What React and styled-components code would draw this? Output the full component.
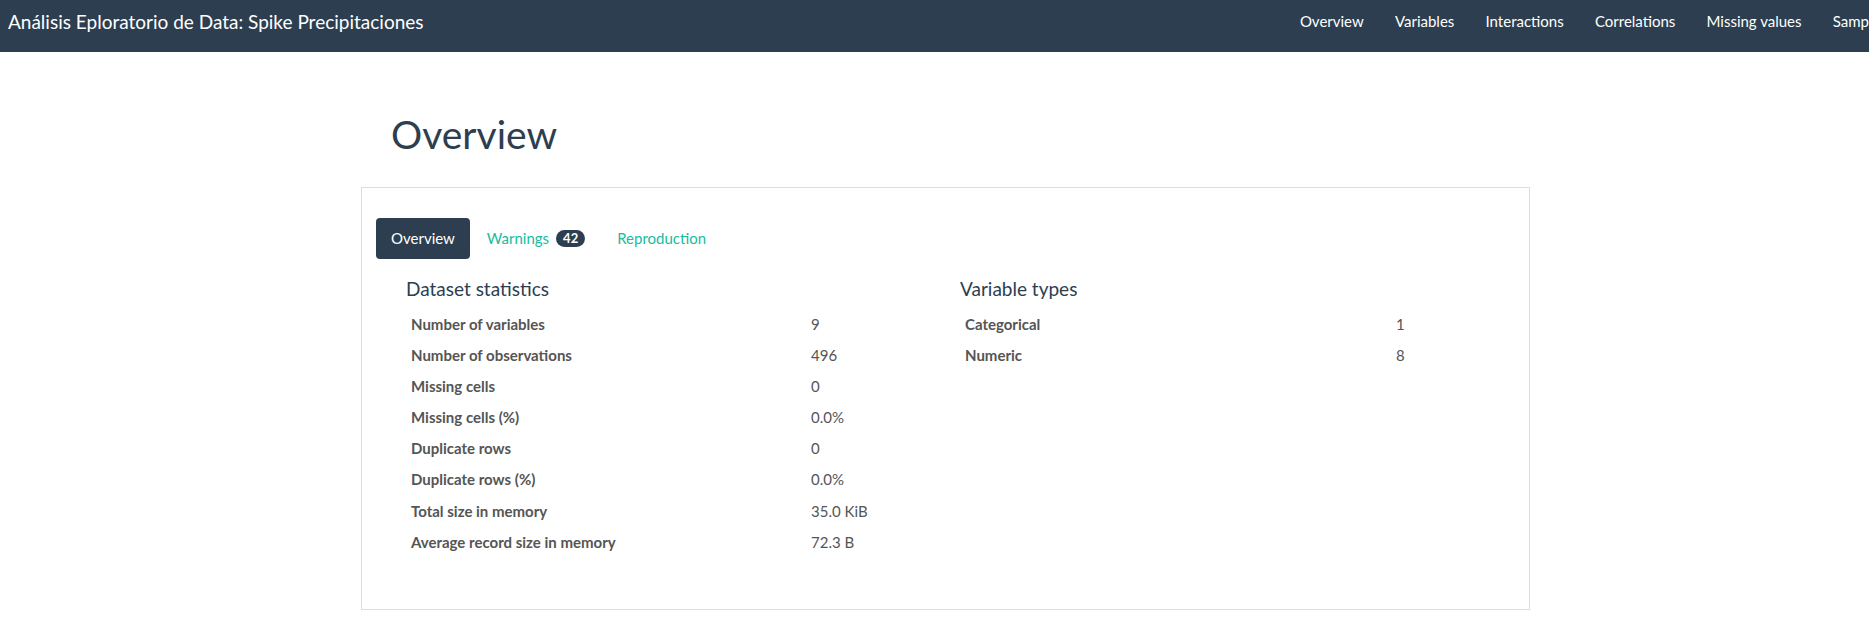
import styled, { createGlobalStyle } from "styled-components";

const GlobalStyle = createGlobalStyle`
    html, body {
        margin: 0;
        padding: 0;
        overflow: hidden;
        background: #fff;
    }
    body {
        font-family: Lato, "Noto Sans", sans-serif;
        font-size: 15px;
        line-height: 1.42857;
        color: #2c3e50;
    }
`

const Page = styled.div`
    width: 1891px;
`

const Navbar = styled.nav`
    height: 52px;
    background-color: #2c3e50;
    display: flex;
    justify-content: space-between;
    align-items: flex-start;
`

const Brand = styled.a`
    padding: 10.5px 0 0 8px;
    font-size: 19px;
    line-height: 21.43px;
    color: #fff;
    text-decoration: none;
`

const NavLinks = styled.ul`
    display: flex;
    list-style: none;
    margin: 0 -5px 0 0;
    padding: 10.5px 0 0;
`

const NavLink = styled.li`
    padding: 0 15.6px;
    color: #fff;
    font-size: 15px;
    line-height: 21.43px;
`

const Container = styled.div`
    width: 1169px;
    margin: 0 auto;
`

const PageHeader = styled.h1`
    margin: 60.5px 0 31.5px 30px;
    font-size: 39px;
    line-height: 1.1;
    font-weight: 400;
    color: #2c3e50;
`

const Panel = styled.div`
    border: 1px solid #ddd;
    padding: 30px 14px 51px;
`

const Pills = styled.ul`
    display: flex;
    list-style: none;
    margin: 0 0 20px;
    padding: 0;
`

const Pill = styled.li`
    display: flex;
    align-items: center;
    margin-left: ${props => props.first ? "0" : "2px"};
    padding: 10px 15px;
    line-height: 21.43px;
    border-radius: 4px;
    color: ${props => props.active ? "#fff" : "#18bc9c"};
    background-color: ${props => props.active ? "#2c3e50" : "transparent"};
`

const Badge = styled.span`
    display: inline-block;
    margin-left: 7px;
    padding: 2px 7px;
    font-size: 13px;
    font-weight: 700;
    line-height: 1;
    color: #fff;
    background-color: #2c3e50;
    border-radius: 10px;
`

const Columns = styled.div`
    display: grid;
    grid-template-columns: 554px 554px;
    padding-left: 30px;
`

const SectionTitle = styled.h4`
    margin: 0 0 8.5px;
    font-size: 19px;
    line-height: 1.1;
    font-weight: 400;
    color: #2c3e50;
`

const StatsTable = styled.table`
    border-collapse: collapse;
    border-spacing: 0;
`

const Label = styled.th`
    width: ${props => props.w}px;
    padding: 5px;
    text-align: left;
    font-weight: 700;
    color: #555;
    line-height: 21.14px;
    box-sizing: border-box;
`

const Value = styled.td`
    padding: 5px;
    color: #555;
    line-height: 21.14px;
    white-space: nowrap;
`

const datasetStats = [
    ["Number of variables", "9"],
    ["Number of observations", "496"],
    ["Missing cells", "0"],
    ["Missing cells (%)", "0.0%"],
    ["Duplicate rows", "0"],
    ["Duplicate rows (%)", "0.0%"],
    ["Total size in memory", "35.0 KiB"],
    ["Average record size in memory", "72.3 B"],
]

const variableTypes = [
    ["Categorical", "1"],
    ["Numeric", "8"],
]

const navItems = ["Overview", "Variables", "Interactions", "Correlations", "Missing values", "Sample"]

function Stats({ title, rows, labelWidth }) {
    return (
        <div>
            <SectionTitle>{title}</SectionTitle>
            <StatsTable>
                <tbody>
                    {rows.map(([label, value]) => (
                        <tr key={label}>
                            <Label w={labelWidth}>{label}</Label>
                            <Value>{value}</Value>
                        </tr>
                    ))}
                </tbody>
            </StatsTable>
        </div>
    )
}

export default function App() {
    return (
        <Page>
            <GlobalStyle />
            <Navbar>
                <Brand>Análisis Eploratorio de Data: Spike Precipitaciones</Brand>
                <NavLinks>
                    {navItems.map(item => <NavLink key={item}>{item}</NavLink>)}
                </NavLinks>
            </Navbar>

            <Container>
                <PageHeader>Overview</PageHeader>
                <Panel>
                    <Pills>
                        <Pill first active>Overview</Pill>
                        <Pill>Warnings <Badge>42</Badge></Pill>
                        <Pill>Reproduction</Pill>
                    </Pills>
                    <Columns>
                        <Stats title="Dataset statistics" rows={datasetStats} labelWidth={400} />
                        <Stats title="Variable types" rows={variableTypes} labelWidth={431} />
                    </Columns>
                </Panel>
            </Container>
        </Page>
    )
}
